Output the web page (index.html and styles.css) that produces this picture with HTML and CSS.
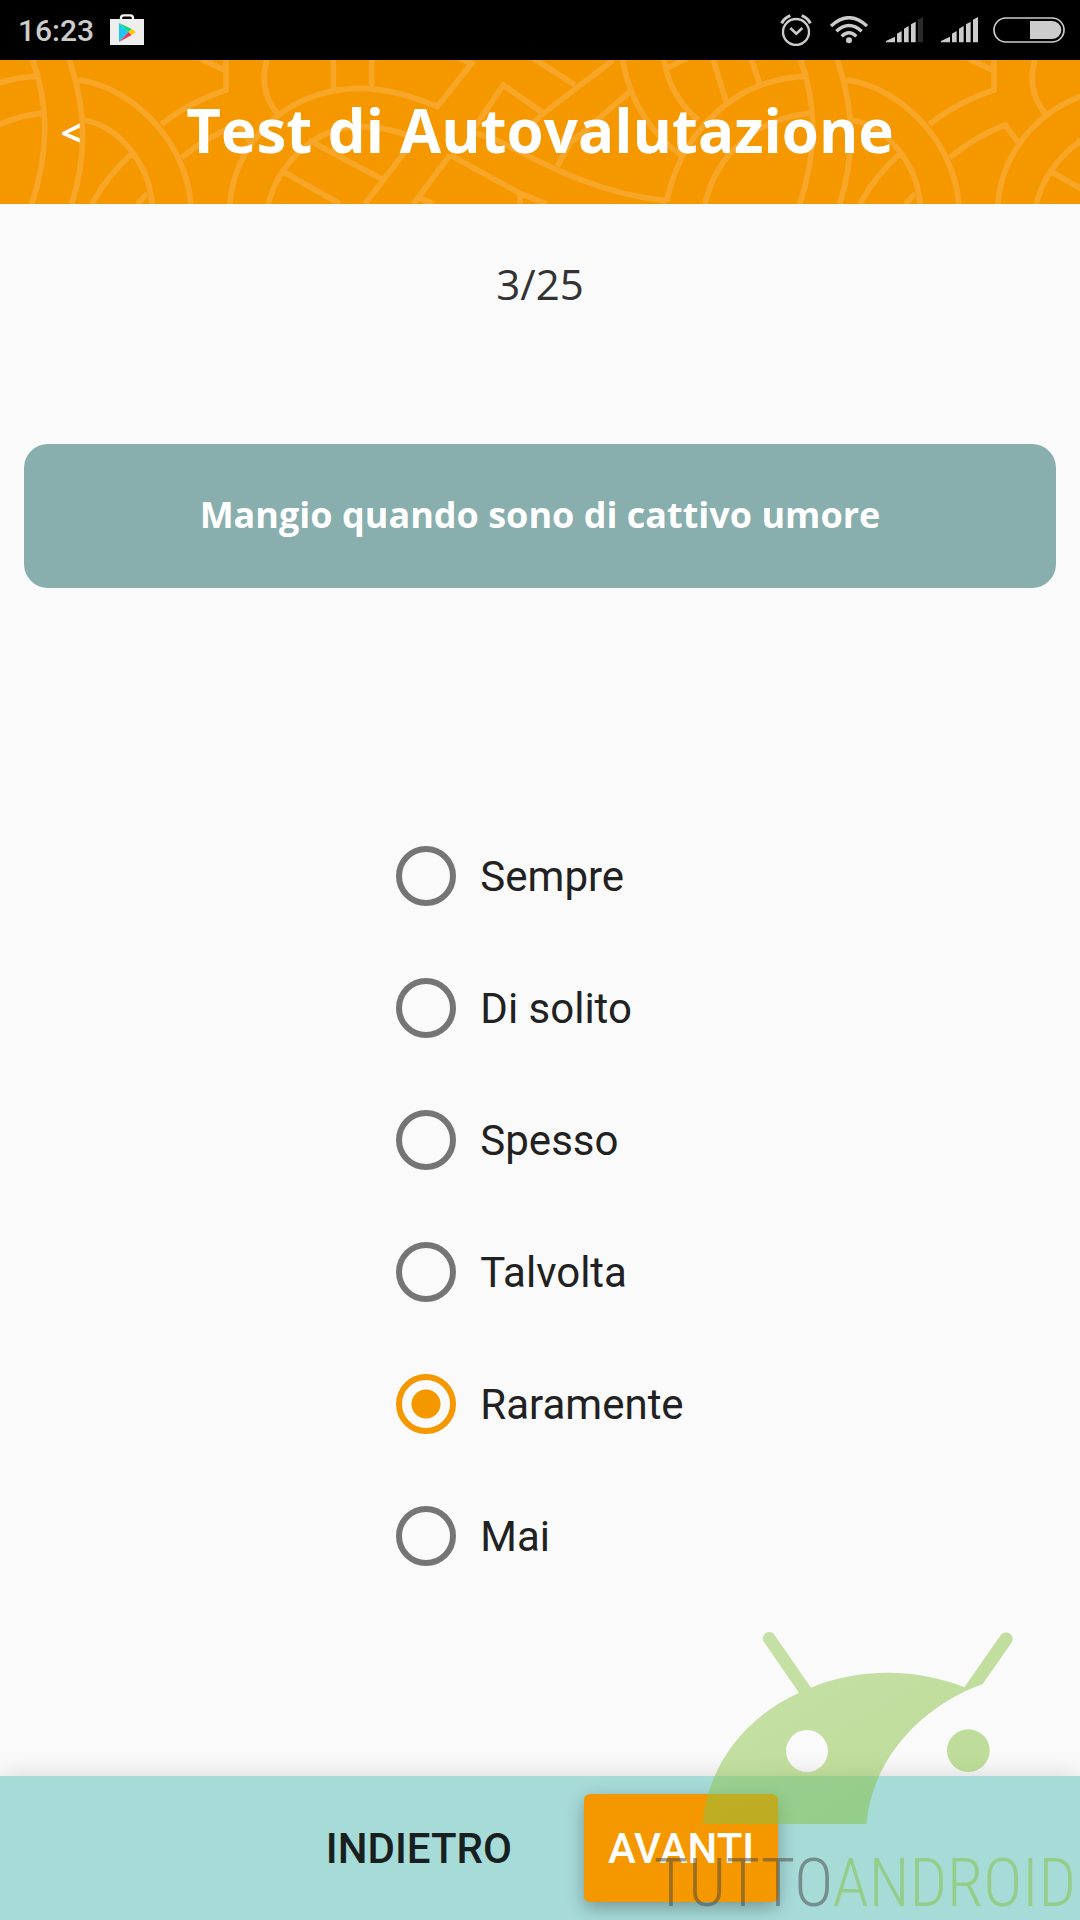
FILE: index.html
```
<!DOCTYPE html>
<html lang="it">
<head>
  <meta charset="utf-8">
  <meta name="viewport" content="width=device-width, initial-scale=1">
  <link rel="stylesheet" href="styles.css">
  <title>Test di Autovalutazione</title>
</head>
<body>

<!-- Status Bar -->
<div class="status-bar">
  <div class="status-left">
    <span class="clock">16:23</span>
    <svg class="store-icon" width="34" height="32" viewBox="0 0 102 96">
      <path d="M33 18V12Q33 4 41 4H61Q69 4 69 12V18" fill="none" stroke="#f5f5f5" stroke-width="7"/>
      <path d="M0 15H102V93H0Z" fill="#eee"/>
      <path d="M27 27V84L56 54Z" fill="#1cc8ee"/>
      <path d="M27 27L65 45L56 54Z" fill="#14d67b"/>
      <path d="M27 84L65 63L56 54Z" fill="#f0344f"/>
      <path d="M65 45L78 54L65 63L56 54Z" fill="#fc0"/>
    </svg>
  </div>
  <div class="status-right">
    <div class="status-icons">
      <svg width="32" height="32" viewBox="0 0 96 96" fill="none" stroke="#ccc">
        <circle cx="48" cy="54" r="39" stroke-width="7"/>
        <path d="M31 42L49 59L67 42" stroke-width="8"/>
        <path d="M5 28Q12 12 31 5M91 28Q84 12 65 5" stroke-width="9"/>
      </svg>
      <svg width="38" height="28" viewBox="0 0 114 84" fill="none" stroke="#ccc" stroke-width="10">
        <path d="M3 30Q57 -20 111 30M19 46Q57 11 95 46M35 61Q57 40 79 61"/>
        <circle cx="57" cy="73" r="9" fill="#ccc" stroke="none"/>
      </svg>
      <svg width="37" height="26" viewBox="0 0 111 78" fill="#ccc">
        <path d="M0 76V72L27 59V76ZM33 76V50L47 42V76ZM54 76V35L68 27V76ZM75 76V22L89 14V76Z"/>
        <path d="M96 76V8L111 0V76Z" fill="#2b2b2b"/>
      </svg>
      <svg width="37" height="26" viewBox="0 0 111 78" fill="#ccc">
        <path d="M0 76V72L27 59V76ZM33 76V50L47 42V76ZM54 76V35L68 27V76ZM75 76V22L89 14V76ZM96 76V8L111 0V76Z"/>
      </svg>
    </div>
    <svg width="72" height="26" viewBox="0 0 216 78">
      <rect x="3" y="3" width="210" height="72" rx="36" fill="none" stroke="#ccc" stroke-width="5"/>
      <path d="M111 12H178A27 27 0 0 1 178 66H111Z" fill="#ccc"/>
    </svg>
  </div>
</div>

<!-- Header -->
<header class="header">
  <svg class="header-pattern" viewBox="0 0 3240 432" preserveAspectRatio="xMidYMid slice">
    <defs>
      <g id="tile">
        <path d="M98 0Q172 205 95 432M208 0Q284 215 215 432"/>
        <path d="M235 60C400 80 560 250 572 432M250 180C370 200 450 330 456 432"/>
        <path d="M396 280Q320 350 275 432M412 432L442 400"/>
        <path d="M485 192Q570 125 678 90V-5M678 32L600 -5"/>
        <path d="M545 293Q620 230 711 195L757 255"/>
        <path d="M800 0Q775 95 835 165"/>
        <path d="M690 432C700 260 850 85 1080 85C1150 85 1230 105 1312 140L1415 10L1380 -5"/>
        <path d="M1000 0V90M1115 0V84"/>
        <path d="M805 432C830 330 930 200 1080 200Q1150 200 1220 225"/>
        <path d="M850 335L1020 432M925 240L1145 357M1095 432L1215 275"/>
        <path d="M1240 432L1350 285M1255 412L1300 432M1350 285L1560 400L1640 432M1560 400V432"/>
        <path d="M1630 160L1510 75L1415 215L1490 240C1610 300 1780 400 2000 422"/>
        <path d="M1600 190L1630 160L1840 0M1725 75L1600 -5M1890 95L1710 250L1672 318"/>
        <path d="M1868 0C1890 130 1960 230 2050 290M1992 0Q2010 110 2095 180"/>
        <path d="M2000 25L2060 -5M2140 0L2180 130M2255 0L2280 75"/>
        <path d="M2000 425C2040 230 2190 60 2412 49M2115 432C2150 280 2270 175 2429 160"/>
      </g>
    </defs>
    <use href="#tile" x="-2304"/>
    <use href="#tile"/>
    <use href="#tile" x="2304"/>
  </svg>
  <button type="button" class="back" aria-label="Indietro">&lt;</button>
  <h1>Test di Autovalutazione</h1>
</header>

<!-- Question -->
<main class="content">
  <p class="counter">3/25</p>
  <h2 class="question" id="question">Mangio quando sono di cattivo umore</h2>

  <form class="answers" id="testForm" aria-labelledby="question">
    <label class="answer"><input type="radio" name="answer" value="sempre">Sempre</label>
    <label class="answer"><input type="radio" name="answer" value="di-solito">Di solito</label>
    <label class="answer"><input type="radio" name="answer" value="spesso">Spesso</label>
    <label class="answer"><input type="radio" name="answer" value="talvolta">Talvolta</label>
    <label class="answer"><input type="radio" name="answer" value="raramente" checked>Raramente</label>
    <label class="answer"><input type="radio" name="answer" value="mai">Mai</label>
  </form>
</main>

<!-- Bottom Buttons -->
<footer class="footer">
  <button type="button" class="btn">INDIETRO</button>
  <button type="submit" form="testForm" class="btn btn-next">AVANTI</button>
</footer>

<!-- Watermark -->
<div class="watermark">
  <svg width="460" height="320" viewBox="0 0 1380 960">
    <defs>
      <linearGradient id="green" x1="0" y1="0" x2="1" y2="1">
        <stop offset="0" stop-color="#95ca58"/>
        <stop offset="1" stop-color="#7fbd36"/>
      </linearGradient>
    </defs>
    <path fill="url(#green)" fill-rule="evenodd" d="M248 672C262 500 370 355 537 278L432 126A19 19 0 0 1 463 104L573 263C720 203 890 205 1033 262L1143 104A20 20 0 0 1 1176 126L1088 252C900 320 755 480 740 672ZM498 453A63 63 0 1 0 624 453A63 63 0 1 0 498 453Z"/>
    <circle cx="1045" cy="452" r="64" fill="#83c03c"/>
  </svg>
  <div class="watermark-text">TUTTO<span>ANDROID</span></div>
</div>

</body>
</html>
```
FILE: styles.css
```
* {
  box-sizing: border-box;
}
body {
  font-family: Roboto, Arial, sans-serif;
  background-color: #fafafa;
  color: #212121;
  margin: 0;
  min-height: 100vh;
  display: flex;
  flex-direction: column;
  position: relative;
}
svg {
  display: block;
}
.status-bar {
  display: flex;
  justify-content: space-between;
  align-items: center;
  height: 60px;
  padding: 0 15px 0 18px;
  background-color: #000;
}
.status-left {
  display: flex;
  align-items: center;
  gap: 16px;
}
.clock {
  font-size: 30px;
  font-weight: 500;
  color: #ccc;
}
.status-right {
  display: flex;
  align-items: center;
  gap: 15px;
}
.status-icons {
  display: flex;
  align-items: center;
  gap: 18px;
}
.header {
  position: relative;
  display: flex;
  align-items: center;
  justify-content: center;
  height: 144px;
  background-color: #f59800;
  color: #fff;
  overflow: hidden;
}
.header-pattern {
  position: absolute;
  top: 0;
  left: 0;
  width: 100%;
  height: 100%;
  fill: none;
  stroke: #f7a628;
  stroke-width: 17;
}
.header h1 {
  position: relative;
  margin: 0;
  padding-bottom: 4px;
  font-family: "Open Sans", "Noto Sans", sans-serif;
  font-size: 60px;
  font-weight: 700;
}
.back {
  position: absolute;
  top: 0;
  left: 0;
  width: 142px;
  height: 100%;
  border: none;
  background: none;
  color: #fff;
  font-family: "Open Sans", "Noto Sans", sans-serif;
  font-size: 36px;
  font-weight: 700;
  cursor: pointer;
}
.content {
  flex: 1;
  display: flex;
  flex-direction: column;
  align-items: center;
  padding: 44px 24px;
}
.counter {
  margin: 0 0 124px;
  font-family: "Open Sans", "Noto Sans", sans-serif;
  font-size: 42px;
  line-height: 72px;
  color: #333;
}
.question {
  width: 100%;
  margin: 0 0 222px;
  padding: 47px 24px 49px;
  border-radius: 24px;
  background-color: #88aead;
  color: #fff;
  font-family: "Open Sans", "Noto Sans", sans-serif;
  font-size: 36px;
  font-weight: 700;
  line-height: 48px;
  text-align: center;
}
.answers {
  display: flex;
  flex-direction: column;
}
.answer {
  display: flex;
  align-items: center;
  gap: 24px;
  height: 132px;
  font-size: 42px;
  cursor: pointer;
}
.answer input {
  appearance: none;
  width: 60px;
  height: 60px;
  margin: 0;
  border: 6px solid #757575;
  border-radius: 50%;
  cursor: pointer;
}
.answer input:checked {
  border-color: #f59800;
  background: radial-gradient(circle, #f59800 14px, transparent 15px);
}
.footer {
  display: flex;
  justify-content: center;
  align-items: center;
  gap: 48px;
  height: 144px;
  background-color: #a7dbd8;
  box-shadow: 0 0 24px rgba(0, 0, 0, 0.15);
}
.btn {
  height: 108px;
  padding: 0 24px;
  border: none;
  border-radius: 6px;
  background: none;
  color: #17201f;
  font-family: Roboto, Arial, sans-serif;
  font-size: 42px;
  font-weight: 500;
  cursor: pointer;
}
.btn-next {
  background-color: #f59800;
  color: #fff;
  box-shadow: 0 6px 18px rgba(0, 0, 0, 0.3);
}
.watermark {
  position: absolute;
  right: 0;
  bottom: 0;
  opacity: 0.5;
  pointer-events: none;
}
.watermark-text {
  position: absolute;
  right: 4px;
  bottom: 0;
  font-family: "Roboto Condensed", Roboto, Arial, sans-serif;
  font-size: 66px;
  font-weight: 300;
  line-height: 72px;
  color: #444;
}
.watermark-text span {
  color: #83c03c;
}
```
